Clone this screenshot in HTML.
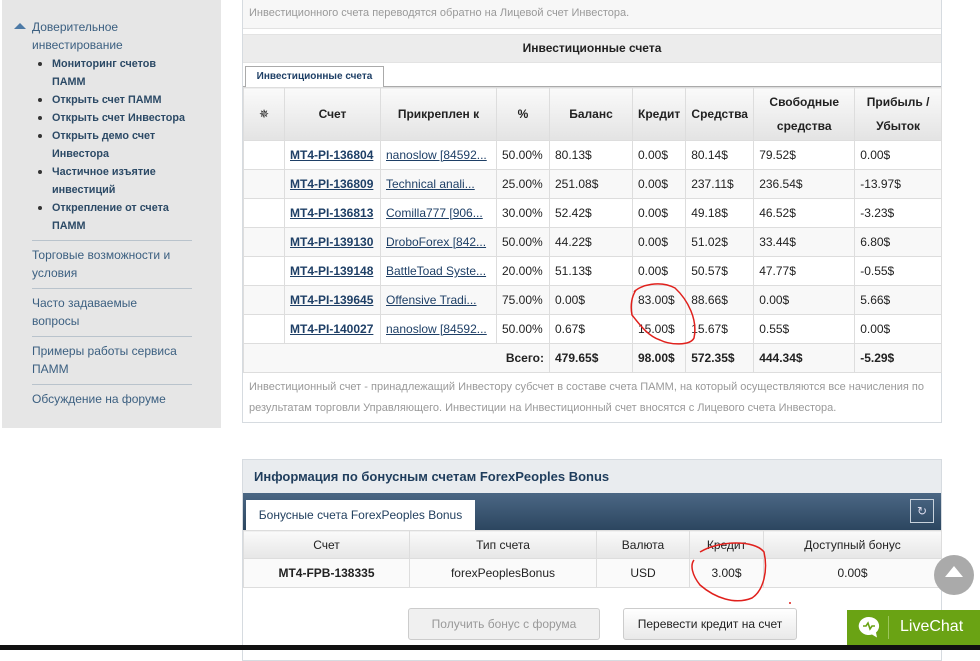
<!DOCTYPE html>
<html><head><meta charset="utf-8"><style>
body{margin:0;width:980px;height:650px;overflow:hidden;background:#fff;font-family:"Liberation Sans","DejaVu Sans",sans-serif;position:relative}
.abs{position:absolute}
#side{left:2px;top:0;width:219px;height:428px;background:#e6e6e6}
.sl{position:absolute;font-size:12px;line-height:18px;color:#3b5f80}
.sub{position:absolute;left:52px;font-size:10.8px;font-weight:bold;line-height:18px;color:#2c4a66}
.dot{position:absolute;left:38px;width:4px;height:4px;background:#333;border-radius:2px}
.hr{position:absolute;left:32px;width:160px;height:1px;background:#b9c3cc}
table{border-collapse:collapse;position:absolute;font-size:12px}
td,th{border:1px solid #ddd;padding:0 5px;white-space:nowrap;color:#222}
.t1 td{height:28px}
.t1 th{background:linear-gradient(#fafafa,#e3e3e3);font-weight:bold;color:#222;font-size:12px}
.t1 tr:nth-child(odd) td{background:#f8f8f8}
.lnk{color:#1e3f66;text-decoration:underline;font-weight:bold}
.lnk2{color:#1e3f66;text-decoration:underline}
.t2 th{background:linear-gradient(#fafafa,#e6e6e6);font-weight:normal;height:27px;font-size:12px}
.t2 td{height:28px;text-align:center;background:#fafafa}
.btn{position:absolute;height:30px;border:1px solid #ccc;border-radius:3px;font-size:12px;text-align:center;line-height:30px;background:linear-gradient(#fff,#e9e9e9)}
</style></head><body>
<div id="side" class="abs"></div>
<div class="abs" style="left:14px;top:23px;width:0;height:0;border-left:6px solid transparent;border-right:6px solid transparent;border-bottom:6px solid #4d7aa6"></div>
<div class="sl" style="left:32px;top:18px">Доверительное<br>инвестирование</div>
<div class="dot" style="top:62px"></div><div class="sub" style="top:55px">Мониторинг счетов<br>ПАММ</div>
<div class="dot" style="top:98px"></div><div class="sub" style="top:91px">Открыть счет ПАММ</div>
<div class="dot" style="top:116px"></div><div class="sub" style="top:109px">Открыть счет Инвестора</div>
<div class="dot" style="top:134px"></div><div class="sub" style="top:127px">Открыть демо счет<br>Инвестора</div>
<div class="dot" style="top:170px"></div><div class="sub" style="top:163px">Частичное изъятие<br>инвестиций</div>
<div class="dot" style="top:206px"></div><div class="sub" style="top:199px">Открепление от счета<br>ПАММ</div>
<div class="hr" style="top:240px"></div>
<div class="sl" style="left:32px;top:246px">Торговые возможности и<br>условия</div>
<div class="hr" style="top:288px"></div>
<div class="sl" style="left:32px;top:294px">Часто задаваемые<br>вопросы</div>
<div class="hr" style="top:336px"></div>
<div class="sl" style="left:32px;top:342px">Примеры работы сервиса<br>ПАММ</div>
<div class="hr" style="top:384px"></div>
<div class="sl" style="left:32px;top:390px">Обсуждение на форуме</div>

<div class="abs" style="left:242px;top:0;width:698px;height:422px;border:1px solid #d6dbe0;border-top:none"></div>
<div class="abs" style="left:243px;top:0;width:698px;height:28px;background:#f7f7f7;border-bottom:1px solid #e2e2e2"></div>
<div class="abs" style="left:249px;top:7px;font-size:11px;color:#999">Инвестиционного счета переводятся обратно на Лицевой счет Инвестора.</div>
<div class="abs" style="left:243px;top:34px;width:698px;height:27px;background:#ececec;border-top:1px solid #e3e3e3;border-bottom:1px solid #e3e3e3;text-align:center;font-size:12px;font-weight:bold;line-height:27px;color:#222">Инвестиционные счета</div>
<div class="abs" style="left:243px;top:86px;width:698px;height:1px;background:#aaa"></div>
<div class="abs" style="left:245px;top:66px;width:137px;height:21px;background:#fff;border:1px solid #aaa;border-bottom:none;font-size:10px;font-weight:bold;color:#1e3f66;text-align:center;line-height:20px">Инвестиционные счета</div>
<table class="t1" style="left:243px;top:87px;width:699px">
<tr style="height:53px"><th style="width:30px">✵</th><th style="width:85px">Счет</th><th style="width:105px">Прикреплен к</th><th style="width:42px">%</th><th style="width:72px">Баланс</th><th style="width:41px">Кредит</th><th style="width:57px">Средства</th><th style="width:90px;line-height:24px">Свободные<br>средства</th><th style="line-height:24px">Прибыль /<br>Убыток</th></tr>
<tr><td></td><td class="lnk">MT4-PI-136804</td><td class="lnk2">nanoslow [84592...</td><td>50.00%</td><td>80.13$</td><td>0.00$</td><td>80.14$</td><td>79.52$</td><td>0.00$</td></tr>
<tr><td></td><td class="lnk">MT4-PI-136809</td><td class="lnk2">Technical anali...</td><td>25.00%</td><td>251.08$</td><td>0.00$</td><td>237.11$</td><td>236.54$</td><td>-13.97$</td></tr>
<tr><td></td><td class="lnk">MT4-PI-136813</td><td class="lnk2">Comilla777 [906...</td><td>30.00%</td><td>52.42$</td><td>0.00$</td><td>49.18$</td><td>46.52$</td><td>-3.23$</td></tr>
<tr><td></td><td class="lnk">MT4-PI-139130</td><td class="lnk2">DroboForex [842...</td><td>50.00%</td><td>44.22$</td><td>0.00$</td><td>51.02$</td><td>33.44$</td><td>6.80$</td></tr>
<tr><td></td><td class="lnk">MT4-PI-139148</td><td class="lnk2">BattleToad Syste...</td><td>20.00%</td><td>51.13$</td><td>0.00$</td><td>50.57$</td><td>47.77$</td><td>-0.55$</td></tr>
<tr><td></td><td class="lnk">MT4-PI-139645</td><td class="lnk2">Offensive Tradi...</td><td>75.00%</td><td>0.00$</td><td>83.00$</td><td>88.66$</td><td>0.00$</td><td>5.66$</td></tr>
<tr><td></td><td class="lnk">MT4-PI-140027</td><td class="lnk2">nanoslow [84592...</td><td>50.00%</td><td>0.67$</td><td>15.00$</td><td>15.67$</td><td>0.55$</td><td>0.00$</td></tr>
<tr><td colspan="4" style="text-align:right;font-weight:bold">Всего:</td><td style="font-weight:bold">479.65$</td><td style="font-weight:bold">98.00$</td><td style="font-weight:bold">572.35$</td><td style="font-weight:bold">444.34$</td><td style="font-weight:bold">-5.29$</td></tr>
</table>
<div class="abs" style="left:249px;top:377px;width:690px;font-size:11px;line-height:21px;color:#999">Инвестиционный счет - принадлежащий Инвестору субсчет в составе счета ПАММ, на который осуществляются все начисления по результатам торговли Управляющего. Инвестиции на Инвестиционный счет вносятся с Лицевого счета Инвестора.</div>

<div class="abs" style="left:242px;top:459px;width:698px;height:200px;border:1px solid #d6dbe0"></div>
<div class="abs" style="left:243px;top:460px;width:698px;height:33px;background:#e9ecef;font-size:13px;font-weight:bold;color:#1f3d5c;line-height:33px;padding-left:11px;box-sizing:border-box">Информация по бонусным счетам ForexPeoples Bonus</div>
<div class="abs" style="left:243px;top:493px;width:698px;height:37px;background:linear-gradient(#4b6784,#2c4660)"></div>
<div class="abs" style="left:246px;top:500px;width:229px;height:30px;background:#fff;font-size:12px;color:#1f3d5c;line-height:30px;text-align:center">Бонусные счета ForexPeoples Bonus</div>
<div class="abs" style="left:910px;top:499px;width:24px;height:24px;border:1px solid #c8d2dc;box-sizing:border-box;color:#dde;font-size:12px;text-align:center;line-height:22px">↻</div>
<table class="t2" style="left:243px;top:530px;width:699px">
<tr><th style="width:155px">Счет</th><th style="width:176px">Тип счета</th><th style="width:82px">Валюта</th><th style="width:63px">Кредит</th><th>Доступный бонус</th></tr>
<tr><td style="font-weight:bold">MT4-FPB-138335</td><td>forexPeoplesBonus</td><td>USD</td><td>3.00$</td><td>0.00$</td></tr>
</table>
<div class="btn" style="left:408px;top:608px;width:190px;color:#999;background:#f0f0f0">Получить бонус с форума</div>
<div class="btn" style="left:623px;top:608px;width:172px;color:#222">Перевести кредит на счет</div>
<div class="abs" style="left:0;top:645px;width:980px;height:5px;background:#111"></div>
<div class="abs" style="left:934px;top:555px;width:40px;height:40px;border-radius:20px;background:#aaa"></div>
<div class="abs" style="left:945px;top:566px;width:0;height:0;border-left:9px solid transparent;border-right:9px solid transparent;border-bottom:11px solid #fff"></div>
<div class="abs" style="left:847px;top:610px;width:133px;height:35px;background:#6aa314"></div>
<svg class="abs" style="left:858px;top:616px" width="24" height="24"><path d="M11 1a10 9 0 1 0 3 17.5l5 3-1-5A10 9 0 0 0 11 1z" fill="#fff"/><path d="M5 10h3l2-3 2 6 2-3h3" fill="none" stroke="#6aa314" stroke-width="1.6"/></svg>
<div class="abs" style="left:888px;top:616px;width:1px;height:23px;background:#9cc65c"></div>
<div class="abs" style="left:900px;top:616px;font-size:16px;color:#fff;line-height:22px">LiveChat</div>
<svg class="abs" style="left:0;top:0" width="980" height="650">
<path d="M634 292 C640 285 660 280 675 288 C688 300 698 320 694 338 C690 346 670 345 660 340 C648 336 640 325 632 315 C630 305 632 296 636 290" fill="none" stroke="#e0201c" stroke-width="1.5"/>
<path d="M700 552 C720 540 755 540 764 552 C768 570 764 590 752 598 C735 605 715 598 700 585 C692 575 690 565 694 560" fill="none" stroke="#e0201c" stroke-width="1.5"/>
<circle cx="790" cy="603" r="1" fill="#e0201c"/>
</svg>
</body></html>
